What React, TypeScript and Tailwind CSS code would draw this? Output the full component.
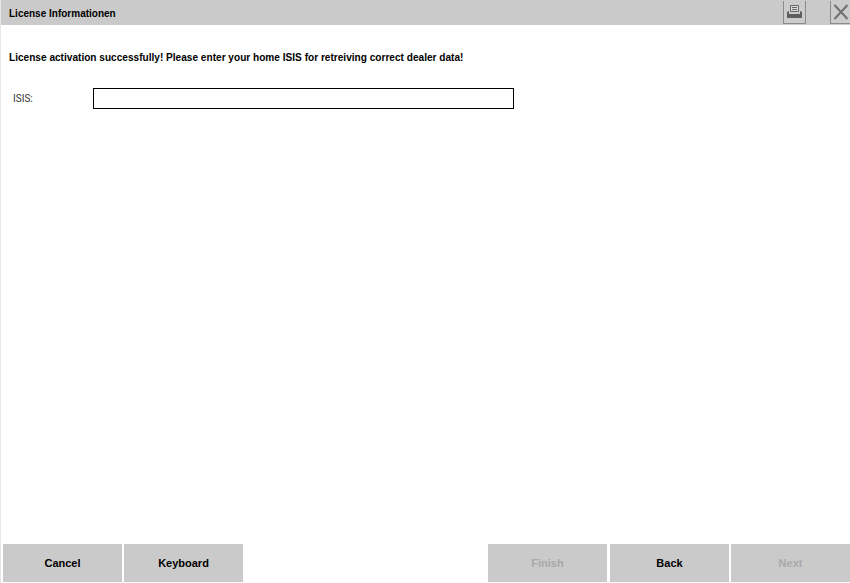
import React from 'react';

const Btn: React.FC<{ label: string; disabled?: boolean; className?: string }> = ({ label, disabled, className = '' }) => (
    <button className={`w-[119px] h-[38px] shrink-0 bg-[#cacaca] text-[11px] font-bold ${disabled ? 'text-[#a9a9a9]' : 'text-black'} ${className}`}>
        {label}
    </button>
);

const App: React.FC = () => {
    return (
        <div className="flex flex-col w-[850px] h-[583px] bg-white font-['Liberation_Sans',Arial,sans-serif] overflow-hidden border-l border-[#e6e6e6]">
            <div className="flex items-center h-[25px] shrink-0 bg-[#cacaca] pl-2 pr-0">
                <span className="flex-1 pt-[1px] text-[10px] font-bold text-black">License Informationen</span>
                <button className="flex items-center justify-center w-[23px] h-[23px] mb-[1px] mr-[24px] border border-[#8a8a8a] border-t-0 bg-[#cccccc]">
                    <svg width="17" height="15" viewBox="0 0 17 15">
                        <path d="M4.5 1.5h8v6h-8z" fill="#dcdcdc" stroke="#666666" />
                        <path d="M6 3.5h5M6 5.5h5" stroke="#666666" />
                        <path d="M1 8l2-1v3h11V7l2 1v6H1z" fill="#5f5f5f" />
                    </svg>
                </button>
                <button className="flex items-center justify-center w-[20px] h-[23px] mb-[1px] border border-[#8a8a8a] border-t-0 border-r-0 bg-[#cccccc]">
                    <svg width="16" height="16" viewBox="0 0 16 16">
                        <path d="M1.5 1l13 14M14.5 1l-13 14" stroke="#707070" strokeWidth="2" />
                    </svg>
                </button>
            </div>
            <div className="flex-1 pl-2 pt-[26px]">
                <p className="text-[10.1px] font-bold leading-[13px] text-black">
                    License activation successfully! Please enter your home ISIS for retreiving correct dealer data!
                </p>
                <div className="flex items-center mt-[24px]">
                    <label className="w-[84px] pl-1 font-['Roboto',sans-serif] text-[10px] text-[#333333]">ISIS:</label>
                    <input type="text" className="w-[421px] h-[21px] border border-black bg-white outline-none" />
                </div>
            </div>
            <div className="flex shrink-0 pl-[2px] gap-[2px] h-[38px] mb-[1px]">
                <Btn label="Cancel" />
                <Btn label="Keyboard" />
                <div className="w-[241px] shrink-0" />
                <Btn label="Finish" disabled className="mr-[1px]" />
                <Btn label="Back" />
                <Btn label="Next" disabled />
            </div>
        </div>
    );
};

export default App;
